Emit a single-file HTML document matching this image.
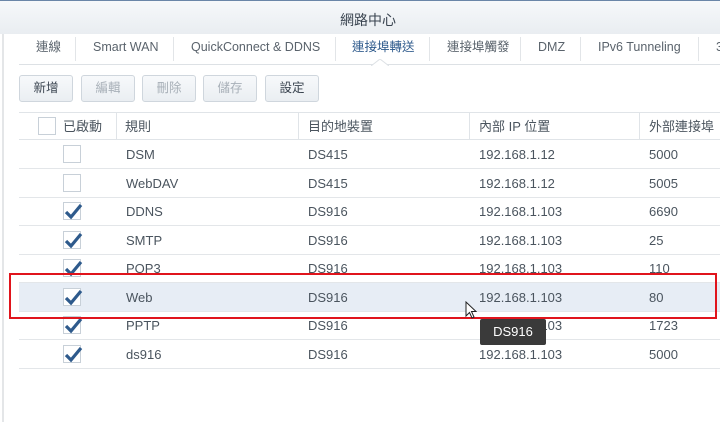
<!DOCTYPE html>
<html><head><meta charset="utf-8"><style>
*{margin:0;padding:0;box-sizing:border-box}
body{width:720px;height:422px;overflow:hidden;background:#fff;font-family:"Liberation Sans","Noto Sans CJK TC",sans-serif;font-size:13px;color:#4a545e;position:relative}
.top{position:absolute;left:0;top:0;width:720px;height:34px;background:linear-gradient(#f6f8fa,#e9edf1);border-top:1px solid #6a86a8}
.top span{position:absolute;left:340px;top:9px;font-size:14px;color:#3a4450}
.lb{position:absolute;left:2px;top:34px;width:2px;height:388px;background:#e4e6e8}
.tabs{position:absolute;left:19px;top:35px;width:701px;height:30px;border-bottom:1px solid #dde1e5}
.tab{position:absolute;top:0;height:27px;line-height:25px;font-size:12.5px;color:#5a636c}
.sep{position:absolute;top:2px;width:1px;height:24px;background:#e2e5e8}
.btn{position:absolute;top:75px;width:54px;height:27px;border:1px solid #cfd6dd;border-radius:3px;background:linear-gradient(#f7f9fb,#eaeef2);text-align:center;line-height:25px;font-size:12.5px;color:#3a4450}
.btn.d{color:#a8b0b8}
.hdr{position:absolute;left:19px;top:112px;width:701px;height:28px;border-top:1px solid #e0e4e8;border-bottom:1px solid #e0e4e8}
.c{position:absolute;top:0;height:100%;line-height:27px}
.vl{position:absolute;top:0;width:1px;height:100%;background:#e0e4e8}
.row{position:absolute;left:19px;width:701px;height:29px;border-bottom:1px solid #e3e6e9;line-height:28px}
.row .c{top:1px}
.cb{position:absolute;left:44px;top:5px;width:18px;height:18px;border:1px solid #c8d0d8;background:#fff}
.cb svg{position:absolute;left:-1px;top:-1px}
</style></head><body>
<div class="top"><span>網路中心</span></div>
<div class="lb"></div>
<div class="tabs">
<div class="tab" style="left:17px">連線</div><div class="sep" style="left:56px"></div>
<div class="tab" style="left:74px">Smart WAN</div><div class="sep" style="left:154px"></div>
<div class="tab" style="left:172px">QuickConnect &amp; DDNS</div><div class="sep" style="left:316px"></div>
<div class="tab" style="left:333px;color:#2e5a8c">連接埠轉送</div><div class="sep" style="left:410px"></div>
<div class="tab" style="left:428px">連接埠觸發</div><div class="sep" style="left:501px"></div>
<div class="tab" style="left:519px">DMZ</div><div class="sep" style="left:561px"></div>
<div class="tab" style="left:579px">IPv6 Tunneling</div><div class="sep" style="left:679px"></div>
<div class="tab" style="left:697px">3</div>
</div>
<svg style="position:absolute;left:371px;top:59px" width="18" height="8"><path d="M0 7 L9 0 L18 7" fill="#fff" stroke="#dde1e5"/><rect x="0" y="7" width="18" height="2" fill="#fff"/></svg>
<div class="btn" style="left:19px">新增</div>
<div class="btn d" style="left:81px">編輯</div>
<div class="btn d" style="left:142px">刪除</div>
<div class="btn d" style="left:203px">儲存</div>
<div class="btn" style="left:265px">設定</div>
<div class="hdr">
<div class="cb" style="left:19px;top:4px"></div>
<div class="c" style="left:44px">已啟動</div><div class="vl" style="left:97px"></div>
<div class="c" style="left:106px">規則</div><div class="vl" style="left:279px"></div>
<div class="c" style="left:289px">目的地裝置</div><div class="vl" style="left:450px"></div>
<div class="c" style="left:460px">內部 IP 位置</div><div class="vl" style="left:620px"></div>
<div class="c" style="left:630px">外部連接埠</div>
</div>
<div class="row" style="top:140px"><div class="cb"></div><div class="c" style="left:107px">DSM</div><div class="c" style="left:289px">DS415</div><div class="c" style="left:460px">192.168.1.12</div><div class="c" style="left:630px">5000</div></div>
<div class="row" style="top:169px"><div class="cb"></div><div class="c" style="left:107px">WebDAV</div><div class="c" style="left:289px">DS415</div><div class="c" style="left:460px">192.168.1.12</div><div class="c" style="left:630px">5005</div></div>
<div class="row" style="top:197px"><div class="cb"><svg width="20" height="20"><path d="M3 10 L8 15 L18 3" fill="none" stroke="#2e5a8c" stroke-width="3.2"/></svg></div><div class="c" style="left:107px">DDNS</div><div class="c" style="left:289px">DS916</div><div class="c" style="left:460px">192.168.1.103</div><div class="c" style="left:630px">6690</div></div>
<div class="row" style="top:226px"><div class="cb"><svg width="20" height="20"><path d="M3 10 L8 15 L18 3" fill="none" stroke="#2e5a8c" stroke-width="3.2"/></svg></div><div class="c" style="left:107px">SMTP</div><div class="c" style="left:289px">DS916</div><div class="c" style="left:460px">192.168.1.103</div><div class="c" style="left:630px">25</div></div>
<div class="row" style="top:254px"><div class="cb"><svg width="20" height="20"><path d="M3 10 L8 15 L18 3" fill="none" stroke="#2e5a8c" stroke-width="3.2"/></svg></div><div class="c" style="left:107px">POP3</div><div class="c" style="left:289px">DS916</div><div class="c" style="left:460px">192.168.1.103</div><div class="c" style="left:630px">110</div></div>
<div class="row" style="top:283px;background:#e7edf5"><div class="cb"><svg width="20" height="20"><path d="M3 10 L8 15 L18 3" fill="none" stroke="#2e5a8c" stroke-width="3.2"/></svg></div><div class="c" style="left:107px">Web</div><div class="c" style="left:289px">DS916</div><div class="c" style="left:460px">192.168.1.103</div><div class="c" style="left:630px">80</div></div>
<div class="row" style="top:311px"><div class="cb"><svg width="20" height="20"><path d="M3 10 L8 15 L18 3" fill="none" stroke="#2e5a8c" stroke-width="3.2"/></svg></div><div class="c" style="left:107px">PPTP</div><div class="c" style="left:289px">DS916</div><div class="c" style="left:460px">192.168.1.103</div><div class="c" style="left:630px">1723</div></div>
<div class="row" style="top:340px"><div class="cb"><svg width="20" height="20"><path d="M3 10 L8 15 L18 3" fill="none" stroke="#2e5a8c" stroke-width="3.2"/></svg></div><div class="c" style="left:107px">ds916</div><div class="c" style="left:289px">DS916</div><div class="c" style="left:460px">192.168.1.103</div><div class="c" style="left:630px">5000</div></div>
<div style="position:absolute;left:9px;top:273px;width:708px;height:46px;border:2px solid #e0141c"></div>
<div style="position:absolute;left:480px;top:319px;width:66px;height:26px;background:#3a3a3a;color:#fff;font-size:13px;line-height:26px;text-align:center;border-radius:2px">DS916</div>
<svg style="position:absolute;left:465px;top:301px" width="12" height="20"><path d="M1 1 L1 15 L4.5 11.5 L7 17 L9 16 L6.5 10.5 L11 10.5 Z" fill="#fff" stroke="#222" stroke-width="1"/></svg>
</body></html>
